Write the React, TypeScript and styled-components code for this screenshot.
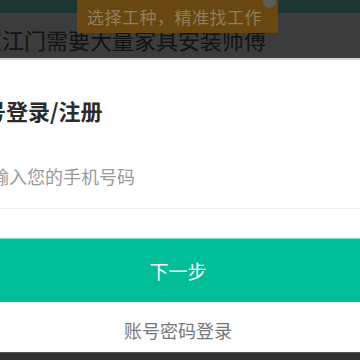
import React from "react";
import styled, { createGlobalStyle } from "styled-components";

const Global = createGlobalStyle`
  html, body { margin: 0; padding: 0; }
  body {
    width: 360px; height: 360px; overflow: hidden; background: #ffffff;
    font-family: "Noto Sans CJK SC", "Noto Sans", sans-serif;
  }
`;

const Page = styled.div`
  width: 360px;
  height: 360px;
  display: flex;
  flex-direction: column;
  overflow: hidden;
  position: relative;
`;

const Backdrop = styled.div`
  height: 58px;
  display: flex;
  flex-direction: column;
  background: #3c3c3c;
  flex-shrink: 0;
`;

const TopStrip = styled.div`
  height: 13px;
  background: #1d3530;
`;

const Headline = styled.div`
  height: 45px;
  display: flex;
  align-items: center;
  margin-left: -20px;
  font-size: 22px;
  color: #121212;
  white-space: nowrap;
  line-height: 1;
  padding-top: 7px;
  box-sizing: border-box;
`;

const Badge = styled.div`
  position: absolute;
  left: 77px;
  top: 0;
  width: 201px;
  height: 33px;
  background: #694710;
  color: #8f7d5c;
  font-size: 17px;
  display: flex;
  align-items: center;
  justify-content: center;
  padding-left: 4px;
  padding-right: 10px;
  box-sizing: border-box;
  white-space: nowrap;
  letter-spacing: 0.5px;
`;

const CloseDot = styled.div`
  position: absolute;
  left: 186px;
  top: -5px;
  width: 13px;
  height: 13px;
  border-radius: 50%;
  background: #5e5c57;
`;

const Sheet = styled.div`
  flex: 1;
  display: flex;
  flex-direction: column;
  background: #ffffff;
  border-top: 2px solid #d4d4d4;
`;

const Title = styled.div`
  margin-top: 38px;
  margin-left: -60px;
  font-size: 22px;
  font-weight: 700;
  color: #2b2b2b;
  line-height: 24px;
  white-space: nowrap;
`;

const InputRow = styled.div`
  margin-top: 42px;
  height: 44px;
  display: flex;
  align-items: flex-start;
  border-bottom: 1px solid #eeeeee;
`;

const Placeholder = styled.div`
  margin-left: -27px;
  font-size: 18px;
  color: #9a9a9a;
  line-height: 24px;
  white-space: nowrap;
`;

const NextButton = styled.div`
  margin-top: 29px;
  height: 64px;
  background: #02be98;
  color: #ffffff;
  font-size: 19px;
  display: flex;
  align-items: center;
  justify-content: center;
  padding-right: 4px;
  border-top: 1px solid #7ed9c3;
  box-sizing: border-box;
`;

const AltLogin = styled.div`
  height: 50px;
  display: flex;
  align-items: center;
  justify-content: center;
  padding-right: 4px;
  padding-top: 6px;
  box-sizing: border-box;
  font-size: 18px;
  color: #777777;
`;

const BottomBar = styled.div`
  height: 8px;
  background: #333333;
  border-top: 1px solid #555555;
  flex-shrink: 0;
`;

export default function App() {
  return (
    <>
      <Global />
      <Page>
        <Backdrop>
          <TopStrip />
          <Headline>在江门需要大量家具安装师傅</Headline>
        </Backdrop>
        <Badge>
          选择工种，精准找工作
          <CloseDot />
        </Badge>
        <Sheet>
          <Title>手机号登录/注册</Title>
          <InputRow>
            <Placeholder>请输入您的手机号码</Placeholder>
          </InputRow>
          <NextButton>下一步</NextButton>
          <AltLogin>账号密码登录</AltLogin>
        </Sheet>
        <BottomBar />
      </Page>
    </>
  );
}
